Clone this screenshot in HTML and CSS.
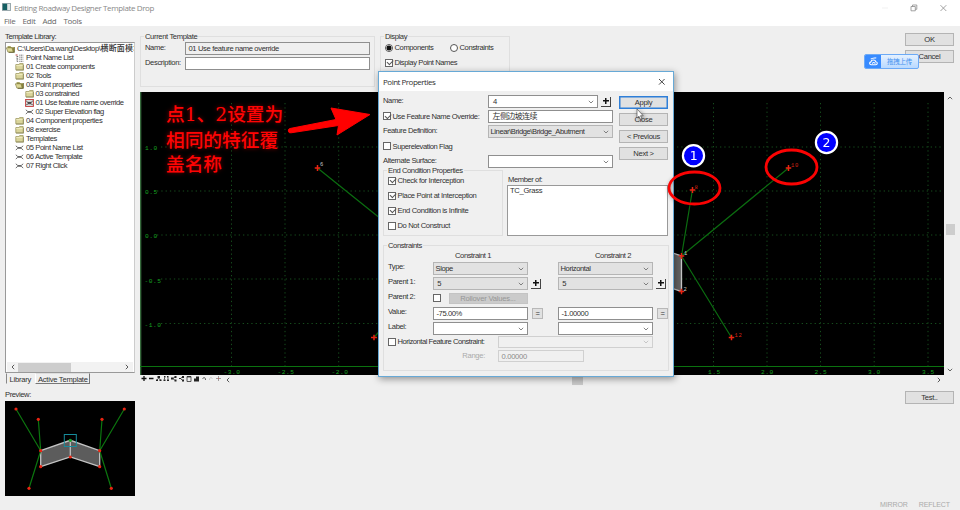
FILE: index.html
```html
<!DOCTYPE html>
<html lang="en">
<head>
<meta charset="utf-8">
<title>Editing Roadway Designer Template Drop</title>
<link rel="stylesheet" href="styles.css">
</head>
<body>
<svg class="defs" width="0" height="0">
  <symbol id="folder" viewBox="0 0 9 8"><path d="M.8 1.6h3l.8-1h3.6v6.2H.8z" fill="#d9d49a" stroke="#918c50" stroke-width=".7"/><path d="M1.2 2.6h6.4" stroke="#f6f3cc" stroke-width=".8"/><path d="M1 7.2h7.6V2" fill="none" stroke="#77733c" stroke-width=".6"/></symbol>
  <symbol id="folder-open" viewBox="0 0 9 8"><path d="M1.5 1.2h3l.8 1h3v5H2z" fill="#8f893a"/><path d="M.3 2.8h5.6l1.4 4.3H1.9z" fill="#dcd795" stroke="#77723a" stroke-width=".6"/><path d="M8.4 2v5.4H3" fill="none" stroke="#55521f" stroke-width=".7"/></symbol>
  <symbol id="list" viewBox="0 0 9 8"><path d="M2 2v5.500M2 2.500h1.500M2 5h1.500M2 7.300h1.500M4.300 1.200h4M4.300 3.200h4M4.300 5.200h4M4.300 7.300h4" fill="none" stroke="#555" stroke-width=".8" stroke-dasharray="1.200 .5"/><path d="M.6 1h2" stroke="#b44" stroke-width="1"/></symbol>
  <symbol id="tpl" viewBox="0 0 9 8"><path d="M.8 1.800l2 1.700h3.400l2-1.700M.8 6l2-1.700h3.400l2 1.700" fill="none" stroke="#444" stroke-width=".8"/></symbol>
  <symbol id="tpl-active" viewBox="0 0 9 8"><rect x=".6" y=".5" width="7.800" height="7" fill="#ddd" stroke="#c33b3b" stroke-width=".9"/><path d="M1.300 2l1.500 1.400h3.400L7.700 2M1.300 6.200l1.500-1.500h3.400l1.500 1.500" fill="none" stroke="#222" stroke-width=".9"/></symbol>
  <symbol id="chev" viewBox="0 0 6 4"><path d="M.8.8L3 3 5.200.8" fill="none" stroke="currentColor" stroke-width=".8"/></symbol>
  <symbol id="cross" viewBox="0 0 6 6"><path d="M3 0v6M0 3h6" stroke="#ea2412" stroke-width="1.500"/></symbol>
</svg>

<header class="titlebar">
  <svg class="app-icon" viewBox="0 0 9 8"><rect width="9" height="8" fill="#9aa9ad"/><rect x=".7" y=".8" width="4.300" height="6.200" fill="#155f63"/><rect x="5.500" y="1" width="2.500" height="6" fill="#dfe8e8"/></svg>
  <span class="title-text">Editing Roadway Designer Template Drop</span>
  <svg class="winctl" viewBox="0 0 80 12"><path d="M4 7h6" stroke="#eee" stroke-width=".8"/><g fill="none" stroke="#8c8c8c" stroke-width=".8"><path d="M33 5.500h4.300v4.300H33zM34.500 5.500V4h4.300v4.300h-1.500"/><path d="M62.500 4.200l5.800 5.800M68.300 4.200L62.500 10"/></g></svg>
</header>
<nav class="menubar"><span>File</span><span>Edit</span><span>Add</span><span>Tools</span></nav>

<div class="workspace">
  <aside class="sidebar">
    <div class="side-label">Template Library:</div>
    <div class="tree">
      <ul>
        <li><svg><use href="#folder-open"/></svg>C:\Users\Da.wang\Desktop\<b>横断面模块</b></li>
        <li class="l1"><svg><use href="#list"/></svg>Point Name List</li>
        <li class="l1"><svg><use href="#folder"/></svg>01 Create components</li>
        <li class="l1"><svg><use href="#folder"/></svg>02 Tools</li>
        <li class="l1"><svg><use href="#folder-open"/></svg>03 Point properties</li>
        <li class="l2"><svg><use href="#folder"/></svg>03 constrained</li>
        <li class="l2"><svg><use href="#tpl-active"/></svg>01 Use feature name override</li>
        <li class="l2"><svg><use href="#tpl"/></svg>02 Super Elevation flag</li>
        <li class="l1"><svg><use href="#folder"/></svg>04 Component properties</li>
        <li class="l1"><svg><use href="#folder"/></svg>08 exercise</li>
        <li class="l1"><svg><use href="#folder"/></svg>Templates</li>
        <li class="l1"><svg><use href="#tpl"/></svg>05 Point Name List</li>
        <li class="l1"><svg><use href="#tpl"/></svg>06 Active Template</li>
        <li class="l1"><svg><use href="#tpl"/></svg>07 Right Click</li>
      </ul>
      <div class="hscroll"><svg class="left"><use href="#chev"/></svg><i></i><svg class="right"><use href="#chev"/></svg></div>
    </div>
    <div class="tabs"><span class="tab active">Library</span><span class="tab">Active Template</span></div>
    <div class="side-label preview-label">Preview:</div>
    <svg class="preview" viewBox="0 0 130 95">
      <rect width="130" height="95" fill="#000"/>
      <path d="M35.700 49.700L65.300 39.300 94.700 49.700v16L65.300 56 35.700 65.700z" fill="#5c5c5c" stroke="#c4c4c4" stroke-width="1.300"/>
      <path d="M65.300 39.300V56" stroke="#c4c4c4" stroke-width="1.200"/>
      <path d="M11 8l24.700 41.700L33.300 18.300M35.700 49.700L24 87.300M119.300 8L94.700 49.700 97 18.300M94.700 49.700l11.600 37.600" fill="none" stroke="#0c760f" stroke-width="1.200"/>
      <rect x="59.300" y="33.500" width="12" height="12" fill="none" stroke="#168c9b" stroke-width="1"/>
      <g fill="#ea2412"><circle cx="11" cy="8" r="1.600"/><circle cx="33.300" cy="18.300" r="1.600"/><circle cx="35.700" cy="49.700" r="1.600"/><circle cx="35.700" cy="65.700" r="1.600"/><circle cx="24" cy="87.300" r="1.600"/><circle cx="65.300" cy="56" r="1.600"/><circle cx="94.700" cy="49.700" r="1.600"/><circle cx="94.700" cy="65.700" r="1.600"/><circle cx="97" cy="18.300" r="1.600"/><circle cx="119.300" cy="8" r="1.600"/><circle cx="106.300" cy="87.300" r="1.600"/></g>
      <circle cx="65.300" cy="39.300" r="1.600" fill="#18a02b"/>
    </svg>
  </aside>

  <main class="main">
    <section class="top">
      <div class="group current"><span class="legend">Current Template</span>
        <span>Name:</span><div class="field readonly">01 Use feature name override</div>
        <span>Description:</span><div class="field"></div>
      </div>
      <div class="group display"><span class="legend">Display</span>
        <label class="opt"><i class="radio on"></i>Components</label><label class="opt"><i class="radio"></i>Constraints</label>
        <label class="opt wide"><i class="check on"></i>Display Point Names</label>
      </div>
      <div class="top-actions"><div class="btn">OK</div><div class="btn">Cancel</div>
        <div class="upload"><span class="cloud"><svg viewBox="0 0 12 12"><path d="M3.500 9.500C1.500 9.500 1 7 3.200 6.400 3.700 3.700 8 3.700 8.500 6.300c2.300.3 2 3.200 0 3.200z" fill="none" stroke="#fff" stroke-width="1.200"/><path d="M4.800 8.500c0-2 3-2 3 0M3 3.500c2-1.500 4-1 6-1.500" fill="none" stroke="#fff" stroke-width="1.100"/></svg></span><span class="upload-text">拖拽上传</span></div>
      </div>
    </section>
    <section class="view">
      <svg class="canvas" viewBox="140 92 804 283">
        <rect x="140" y="92" width="804" height="283" fill="#000"/>
        <g stroke="#164d1d" stroke-width="1" stroke-dasharray="1.300 3">
          <path d="M161 147H942M157 191H942M157 235H942M161 279H942M161 323.500H942"/>
          <path d="M231.500 103V366M285 103V366M338.700 103V366M713.500 103V366M767 103V366M820.500 103V366M874.200 103V366M928 103V366"/>
        </g>
        <path d="M140.700 92V375" stroke="#3c7643" stroke-width="1.200"/><path d="M140 366.500H944" stroke="#0b720f" stroke-width="1"/>
        <g class="axis"><text x="145" y="149.500">1.0</text><text x="145" y="193.500">0.5</text><text x="145" y="238">0.0</text><text x="144.500" y="282.500">-0.5</text><text x="144.500" y="326.500">-1.0</text>
        <text x="223.500" y="373.500">-3.0</text><text x="277.500" y="373.500">-2.5</text><text x="331.500" y="373.500">-2.0</text><text x="708" y="373.500">1.5</text><text x="761" y="373.500">2.0</text><text x="814.500" y="373.500">2.5</text><text x="868" y="373.500">3.0</text><text x="922" y="373.500">3.5</text></g>
        <path d="M660 248.500L681.500 256v35.500L660 284z" fill="#626262" stroke="#c6c6c6" stroke-width="1.300"/>
        <path d="M317.500 168L381 219M374 337.500l6-7M692.500 189.500L681.500 256 788.500 168M681.500 256l50 81.500" fill="none" stroke="#0b6d10" stroke-width="1.200"/>
        <use href="#cross" x="314.500" y="165" width="6" height="6"/><use href="#cross" x="371" y="334.500" width="6" height="6"/><use href="#cross" x="689.500" y="187" width="6" height="6"/><use href="#cross" x="785.500" y="165" width="6" height="6"/><use href="#cross" x="678.500" y="253" width="6" height="6"/><use href="#cross" x="678.500" y="288.500" width="6" height="6"/><use href="#cross" x="728.500" y="334.500" width="6" height="6"/>
        <g class="ptname"><text x="320" y="166">6</text><text x="684" y="255">1</text><text x="683.500" y="290.500">2</text></g>
        <g class="ptname red"><text x="694.500" y="189">8</text><text x="791" y="167">10</text><text x="734.500" y="336.500">12</text></g>
      </svg>
      <div class="vscroll"><svg class="up"><use href="#chev"/></svg><i></i><svg><use href="#chev"/></svg></div>
    </section>
    <section class="toolrow">
      <svg class="tools" viewBox="0 0 85 10">
        <g fill="none" stroke="#111" stroke-width="1.300"><path d="M1.500 3.500h5M4 1v5M9 3.500h4.500"/></g>
        <g fill="#222"><path d="M17.500 1h2.500v2h-2.500zM16 4.500h2V6h-2zM19.500 4.500h2V6h-2zM24 1h1.500v1.500H24zM27 1h1.500v1.500H27zM23.500 4.500h2V6h-2zM27 4.500h2V6h-2zM31 2.500h2.500v2H31zM34.500 1h2v2h-2zM34.500 4.500h2v2h-2zM39 3h2v1h-2zM42 1h2v2h-2zM42 4.500h2v2h-2z"/><path d="M54 6.500V3.500h2V1.500h3v5z"/></g>
        <g fill="none" stroke="#333" stroke-width=".8"><path d="M18.700 3L17 5M18.700 3l1.800 2M24.500 2.500v2M28 2.500v2M33 3.500l2-1.500M33 3.500l2 2M40.500 3.500l2-1.500M40.500 3.500l2 2M47 1.500h4v5h-4z"/><path d="M47 1.700h4" stroke-width="1.400"/><path d="M62.500 4c1-2 3-2 3 1"/><path d="M69.500 5c0-3 2-3 3-1" stroke="#bbb"/><path d="M76 3.500h5M78.500 1v5" stroke="#888"/><path d="M78 3.500h1" stroke="#d55"/></g>
      </svg>
      <svg class="left"><use href="#chev"/></svg><i class="hthumb"></i><svg class="right"><use href="#chev"/></svg>
    </section>
    <div class="test"><div class="btn">Test..</div></div>
    <footer class="status"><span>MIRROR</span><span>REFLECT</span></footer>
  </main>
</div>

<div class="dialog">
  <div class="dlg-title"><span>Point Properties</span><svg viewBox="0 0 8 8"><path d="M1 1l5.600 5.600M6.600 1L1 6.600" stroke="#333" stroke-width=".9"/></svg></div>
  <div class="dlg-body">
    <div class="upper">
      <div class="form">
        <span>Name:</span><div class="pair"><div class="field combo">4<svg><use href="#chev"/></svg></div><div class="pick"></div></div>
        <label class="opt"><i class="check on"></i>Use Feature Name Override:</label><div class="field cjk">左侧边坡连续</div>
        <span>Feature Definition:</span><div class="field combo gray">Linear\Bridge\Bridge_Abutment<svg><use href="#chev"/></svg></div>
        <label class="opt"><i class="check"></i>Superelevation Flag</label><span></span>
        <span>Alternate Surface:</span><div class="field combo"><svg><use href="#chev"/></svg></div>
      </div>
      <div class="dlg-actions"><div class="btn focus">Apply</div><div class="btn">Close</div><div class="btn">&lt; Previous</div><div class="btn">Next &gt;</div></div>
    </div>
    <div class="middle">
      <div class="group endcond"><span class="legend">End Condition Properties</span>
        <label class="opt"><i class="check on"></i>Check for Interception</label>
        <label class="opt"><i class="check on"></i>Place Point at Interception</label>
        <label class="opt"><i class="check on"></i>End Condition is Infinite</label>
        <label class="opt"><i class="check"></i>Do Not Construct</label>
      </div>
      <div class="members"><span>Member of:</span><div class="listbox">TC_Grass</div></div>
    </div>
    <div class="group constraints"><span class="legend">Constraints</span>
      <div class="heads"><span></span><span>Constraint 1</span><span>Constraint 2</span></div>
      <div class="crow"><span>Type:</span><div class="field combo gray">Slope<svg><use href="#chev"/></svg></div><span></span><div class="field combo gray">Horizontal<svg><use href="#chev"/></svg></div><span></span></div>
      <div class="crow"><span>Parent 1:</span><div class="field combo gray">&nbsp;5<svg><use href="#chev"/></svg></div><div class="pick"></div><div class="field combo gray">&nbsp;5<svg><use href="#chev"/></svg></div><div class="pick"></div></div>
      <div class="crow"><span>Parent 2:</span><div class="rollover"><i class="check"></i><div class="btn off">Rollover Values...</div></div></div>
      <div class="crow"><span>Value:</span><div class="field">-75.00%</div><div class="eq">=</div><div class="field">-1.00000</div><div class="eq">=</div></div>
      <div class="crow"><span>Label:</span><div class="field combo"><svg><use href="#chev"/></svg></div><span></span><div class="field combo"><svg><use href="#chev"/></svg></div><span></span></div>
      <div class="hrow"><label class="opt"><i class="check"></i>Horizontal Feature Constraint:</label><div class="field combo disabled"><svg><use href="#chev"/></svg></div></div>
      <div class="hrow range"><span>Range:</span><div class="field disabled">0.00000</div></div>
    </div>
  </div>
</div>

<svg class="annotations" viewBox="0 0 960 510">
  <path d="M290 128.500L336 119.500 331 108 370 114.500 337 135 338.500 125.500 291 132.800A2.200 2.200 0 0 1 290 128.500z" fill="#f00" stroke="#f00" stroke-width="1"/>
  <ellipse cx="694.500" cy="188" rx="25.500" ry="16" fill="none" stroke="#fb0303" stroke-width="2.800"/>
  <ellipse cx="791.500" cy="167" rx="25.500" ry="17" fill="none" stroke="#fb0303" stroke-width="2.800"/>
  <g fill="#0000fe" stroke="#fff" stroke-width="2.200"><circle cx="693.500" cy="155.700" r="10.600"/><circle cx="826.500" cy="142.500" r="10.600"/></g>
  <g class="badge-no"><text x="693.700" y="160.200">1</text><text x="826.500" y="147">2</text></g>
  <path d="M637 109v9l2-1.800 1.300 3 1.500-.7-1.300-2.800h2.700z" fill="#fff" stroke="#555" stroke-width=".7"/>
</svg>
<p class="note">点<span>1</span>、<span>2</span>设置为<br>相同的特征覆<br>盖名称</p>
</body>
</html>
```
FILE: styles.css
```css
* { box-sizing: border-box; }
body {
  margin: 0; width: 960px; height: 510px; overflow: hidden; position: relative;
  display: flex; flex-direction: column; background: #efefef; color: #303030;
  font: 7.6px/9px "Liberation Sans", "Noto Sans CJK SC", sans-serif;
  letter-spacing: -.41px; white-space: nowrap;
}
.defs { position: absolute; }
svg { display: block; flex: none; }

.titlebar { height: 14px; background: #fff; display: flex; align-items: center; padding-left: 2px; gap: 3px; color: #888; flex: none; }
.app-icon { width: 9px; height: 8px; }
.title-text, .menubar, .dlg-title { font-family: "Open Sans", sans-serif; font-size: 8px; letter-spacing: -.38px; }
.winctl { width: 80px; height: 12px; margin-left: auto; margin-right: 2px; }
.menubar { height: 12px; background: #fff; display: flex; gap: 7px; padding: 2px 0 0 4px; color: #666; flex: none; letter-spacing: -.3px; }

.workspace { flex: 1; display: flex; min-height: 0; }
.sidebar { width: 140px; padding: 6px 5px 0; flex: none; }
.side-label { height: 10px; padding-top: 0; }
.tree { height: 331px; background: #fff; border: 1px solid #999; border-right-color: #ccc; display: flex; flex-direction: column; overflow: hidden; }
.tree ul { list-style: none; margin: 0; padding: 1px 0 0; flex: 1; overflow: hidden; }
.tree li { height: 9px; display: flex; align-items: center; gap: 2px; }
.tree li svg { width: 9px; height: 8px; }
.tree li b { font-weight: 500; letter-spacing: .2px; font-size: 8px; margin-left: -2px; }
.tree .l1 { padding-left: 9px; }
.tree .l2 { padding-left: 18.500px; letter-spacing: -.44px; }
.hscroll { height: 10px; background: #f2f2f2; display: flex; align-items: center; padding: 0 3px; margin: 0 1px; color: #333; }
.hscroll svg, .vscroll svg, .toolrow .left, .toolrow .right { width: 6px; height: 4px; }
.hscroll i { width: 53px; height: 9px; background: #cdcdcd; margin: 0 auto 0 2px; }
.left { transform: rotate(90deg); }
.right { transform: rotate(-90deg); }
.up { transform: rotate(180deg); }
.tabs { display: flex; gap: 1px; height: 12px; padding-left: 1px; }
.tab { border: 1px solid #777; border-left-color: #fff; border-top-color: #ddd; border-width: 1px 1.500px 1.500px 1px; padding: 1px 1.500px 0; height: 11px; letter-spacing: -.25px; }
.tab.active { border-color: transparent transparent transparent #888; padding: 1px 2.500px 0; }
.preview-label { padding-top: 5px; height: 15.500px; }
.preview { width: 130px; height: 95px; }

.main { flex: 1; display: flex; flex-direction: column; min-width: 0; }
.top { height: 66px; display: flex; padding-top: 10px; flex: none; }
.group { border: 1px solid #dfdfdf; position: relative; }
.legend { position: absolute; top: -5px; left: 3px; padding: 0 1px; background: #efefef; }
.current { width: 235px; height: 51px; display: grid; grid-template-columns: 40px 185px; grid-auto-rows: 15px; align-items: center; padding: 4px 0 0 4px; letter-spacing: -.36px; }
.current > span { margin-top: -2px; }
.current .legend { margin: 0; }
.field { height: 12.500px; background: #fff; border: 1px solid #8f8f8f; padding: 0 2.500px; display: flex; align-items: center; overflow: hidden; }
.field.readonly { background: #efefef; }
.display { width: 130px; height: 51px; margin-left: 5px; display: grid; grid-template-columns: 65px 60px; grid-auto-rows: 15px; padding: 3px 0 0 4px; align-items: center; }
.opt { display: flex; align-items: center; gap: 1.500px; }
.opt.wide { grid-column: 1 / 3; }
.check { width: 8px; height: 8px; border: 1px solid #666; background: #fff; flex: none; position: relative; }
.check.on::after { content: ""; position: absolute; left: .7px; top: .8px; width: 4.500px; height: 2.500px; border: solid #555; border-width: 0 0 1px 1px; transform: rotate(-45deg); }
.radio { width: 8px; height: 8px; border: 1px solid #555; border-radius: 50%; background: #fff; flex: none; }
.radio.on { background: radial-gradient(circle, #111 0 2.200px, #fff 2.800px); }
.top-actions { margin: -3px 6px 0 auto; display: flex; flex-direction: column; gap: 4px; position: relative; }
.btn { width: 49px; height: 13px; background: #e1e1e1; border: 1px solid #b4b4b4; display: flex; align-items: center; justify-content: center; flex: none; letter-spacing: -.3px; }
.upload { position: absolute; left: -41px; top: 21px; width: 55px; height: 15px; border: 1px solid #6caaf6; border-radius: 2px; display: flex; background: linear-gradient(#e5f1ff, #b9d9ff); color: #4390ee; overflow: hidden; }
.cloud { width: 16px; background: #388bff; display: flex; align-items: center; justify-content: center; }
.cloud svg { width: 11px; height: 11px; }
.upload-text { flex: 1; text-align: center; line-height: 14px; font-size: 6.500px; letter-spacing: -.3px; }

.view { display: flex; height: 283px; flex: none; }
.canvas { width: 804px; height: 283px; }
.axis { fill: #17a321; font: 6.200px "Liberation Mono", monospace; letter-spacing: .5px; }
.ptname { fill: #ccc; font: 5.500px "Liberation Mono", monospace; letter-spacing: .8px; }
.ptname.red { fill: #d62414; }
.vscroll { width: 10px; margin-left: 1px; display: flex; flex-direction: column; align-items: center; padding: 4px 0 3px; color: #444; }
.vscroll i { width: 9px; height: 11px; background: #cdcdcd; margin: 124px 0 auto; }
.toolrow { height: 10px; display: flex; align-items: center; flex: none; color: #333; }
.tools { width: 85px; height: 10px; }
.hthumb { width: 11px; height: 9px; background: #c9c9c9; margin-left: 341px; }
.toolrow .right { margin: 0 18px 0 auto; }
.test { display: flex; justify-content: flex-end; padding: 6px 6px 0; }
.status { margin-top: auto; display: flex; justify-content: flex-end; gap: 11px; padding: 0 10px 1px; color: #aaa; letter-spacing: -.1px; font-size: 7px; }

.dialog { position: absolute; left: 378px; top: 71px; width: 296px; height: 305.500px; background: #f0f0f0; border: 1px solid #67a9d6; box-shadow: 1px 2px 7px rgba(0,0,0,.4); }
.dialog .legend { background: #f0f0f0; }
.dlg-title { height: 19px; background: #fff; display: flex; align-items: center; justify-content: space-between; padding: 0 7px 0 4px; letter-spacing: -.5px; }
.dlg-title svg { width: 8px; height: 8px; }
.dlg-body { padding: 3px 4px 0; }
.upper { display: flex; height: 75px; }
.form { width: 231px; display: grid; grid-template-columns: 105px 125px; grid-auto-rows: 15px; align-items: center; }
.form > span { margin-top: -3px; }
.form > .opt { margin-top: -1px; }
.pair { display: flex; gap: 3px; align-items: center; }
.pair .combo { width: 110px; padding-left: 4px; }
.combo svg { width: 6px; height: 4px; margin: 0 1px 0 auto; color: #666; }
.field.gray { background: #e2e2e2; border-color: #b5b5b5; padding-left: 1.500px; }
.field.cjk { padding-left: 3.500px; font-size: 8px; letter-spacing: -.6px; }
.pick { width: 10px; height: 10px; border-right: 1px solid #444; border-bottom: 1px solid #444; background: linear-gradient(#111, #111) center / 6px 1.500px no-repeat, linear-gradient(#111, #111) center / 1.500px 6px no-repeat; }
.dlg-actions { padding: 2px 0 0 5px; display: flex; flex-direction: column; gap: 4px; }
.dlg-actions .btn { height: 13px; }
.btn.focus { border: 1.500px solid #2f7fd8; box-shadow: inset 0 0 0 .5px #2f7fd8; }
.middle { display: flex; gap: 4px; padding-top: 1px; }
.endcond { width: 120px; height: 66px; padding: 2px 0 0 4px; }
.endcond .opt { height: 15px; letter-spacing: -.36px; }
.members { padding-top: 5px; }
.members span { display: block; height: 10px; padding-left: 1px; }
.listbox { width: 161px; height: 51px; background: #fff; border: 1px solid #999; padding: 0 2px; letter-spacing: -.3px; }
.constraints { height: 126px; width: 286px; margin-top: 9px; padding: 4px 0 0 4px; }
.heads, .crow { display: grid; grid-template-columns: 45px 95px 30px 95px 15px; align-items: center; }
.heads { height: 11px; grid-template-columns: 45px 125px 110px; }
.heads span { margin-top: -1px; }
.heads span:nth-child(2) { padding-left: 22px; }
.heads span:nth-child(3) { padding-left: 37px; }
.crow { height: 15px; }
.crow > span { margin-top: -5px; }
.crow .pick { margin-left: 3px; }
.rollover { display: flex; gap: 7.500px; align-items: center; }
.rollover .check { margin-top: -2px; }
.btn.off { width: 79px; height: 11px; background: #cbcbcb; border-color: #c4c4c4; color: #969696; letter-spacing: -.2px; }
.eq { width: 11px; height: 11px; background: #e1e1e1; border: 1px solid #b8b8b8; margin-left: 4px; display: flex; align-items: center; justify-content: center; }
.hrow { display: grid; grid-template-columns: 110px 155px; height: 14px; align-items: center; }
.hrow .opt { letter-spacing: -.48px; margin-top: -3px; }
.field.disabled { height: 11.500px; background: #f0f0f0; border-color: #d0d0d0; color: #8a8a8a; letter-spacing: -.3px; margin-top: -2px; }
.disabled svg { color: #bbb; }
.range .disabled { width: 86px; }
.range span { color: #aaa; text-align: right; padding-right: 13px; margin-top: -4px; letter-spacing: -.3px; }

.annotations { position: absolute; left: 0; top: 0; width: 960px; height: 510px; filter: drop-shadow(1px 1px 2px rgba(0,0,0,.45)); }
.badge-no { fill: #fff; font: 12.500px "DejaVu Sans", sans-serif; text-anchor: middle; letter-spacing: 0; }
.note { position: absolute; left: 166px; top: 100.500px; margin: 0; color: #ff0404; font: 500 18.700px/24.200px "Noto Sans CJK SC", sans-serif; letter-spacing: 0; text-shadow: 0 0 4px rgba(255,0,0,.5); }
.note span { font-family: "DejaVu Serif", serif; font-weight: 400; }
```
